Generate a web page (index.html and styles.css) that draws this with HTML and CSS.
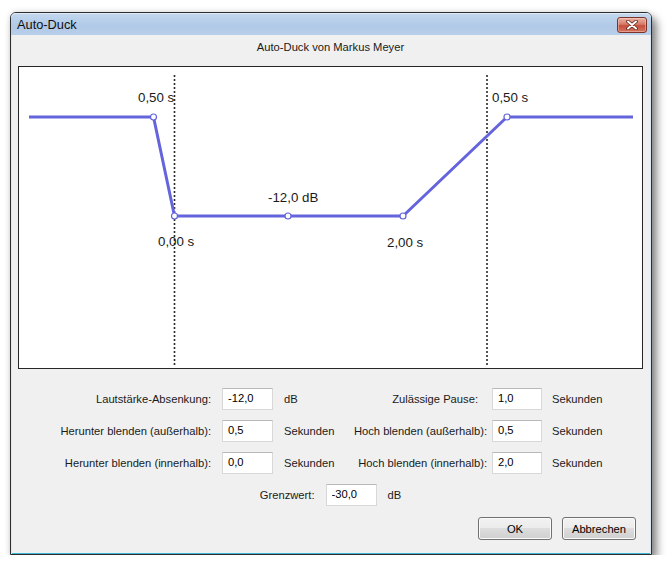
FILE: index.html
```html
<!DOCTYPE html>
<html lang="de">
<head>
<meta charset="utf-8">
<title>Auto-Duck</title>
<link rel="stylesheet" href="styles.css">
</head>
<body>
<div class="window">
  <div class="titlebar">
    <span class="title">Auto-Duck</span>
    <div class="close" aria-label="Schließen">
      <svg width="14" height="10" viewBox="0 0 14 10">
        <path d="M3 1.5 L11 8.5 M11 1.5 L3 8.5" stroke="#5a241b" stroke-width="3.6" stroke-linecap="round" fill="none"/>
        <path d="M3 1.5 L11 8.5 M11 1.5 L3 8.5" stroke="#ffffff" stroke-width="2" stroke-linecap="round" fill="none"/>
      </svg>
    </div>
  </div>
  <div class="client">
    <div class="caption">Auto-Duck von Markus Meyer</div>
    <div class="graph">
      <svg width="623" height="301" viewBox="0 0 623 301">
        <line class="dash" x1="155.5" y1="8" x2="155.5" y2="299"/>
        <line class="dash" x1="468" y1="8" x2="468" y2="299"/>
        <polyline class="curve" points="10,50 134.5,50 155.5,149 384,149 488,50 614,50"/>
        <circle class="pt" cx="134.5" cy="50" r="3"/>
        <circle class="pt" cx="155.5" cy="149" r="3"/>
        <circle class="pt" cx="269" cy="149" r="3"/>
        <circle class="pt" cx="384" cy="149" r="3"/>
        <circle class="pt" cx="488" cy="50" r="3"/>
        <text class="gl" x="119" y="35">0,50 s</text>
        <text class="gl" x="139" y="179">0,00 s</text>
        <text class="gl" x="249" y="135">-12,0 dB</text>
        <text class="gl" x="368" y="180">2,00 s</text>
        <text class="gl" x="473" y="35">0,50 s</text>
      </svg>
    </div>
    <div class="form">
      <span class="lbl">Lautstärke-Absenkung:</span>
      <input class="field f1" type="text" value="-12,0">
      <span class="unit u1">dB</span>
      <span class="lbl r1">Zulässige Pause:</span>
      <input class="field f2" type="text" value="1,0">
      <span class="unit u2">Sekunden</span>

      <span class="lbl">Herunter blenden (außerhalb):</span>
      <input class="field f1" type="text" value="0,5">
      <span class="unit u1">Sekunden</span>
      <span class="lbl r2">Hoch blenden (außerhalb):</span>
      <input class="field f2" type="text" value="0,5">
      <span class="unit u2">Sekunden</span>

      <span class="lbl">Herunter blenden (innerhalb):</span>
      <input class="field f1" type="text" value="0,0">
      <span class="unit u1">Sekunden</span>
      <span class="lbl r2">Hoch blenden (innerhalb):</span>
      <input class="field f2" type="text" value="2,0">
      <span class="unit u2">Sekunden</span>
    </div>
    <div class="thresh">
      <span class="lbl">Grenzwert:</span>
      <input class="field f3" type="text" value="-30,0">
      <span class="unit">dB</span>
    </div>
    <div class="buttons">
      <button class="btn" type="button">OK</button>
      <button class="btn" type="button">Abbrechen</button>
    </div>
  </div>
</div>
</body>
</html>
```

FILE: styles.css
```css
html, body {
  margin: 0;
  padding: 0;
  background: #ffffff;
}

body {
  font-family: "Liberation Sans", Arial, sans-serif;
  font-size: 11.2px;
  color: #1a1a1a;
}

.window {
  margin: 12px 0 0 10px;
  width: 642px;
  box-sizing: border-box;
  border: 1px solid #2e2e2e;
  border-radius: 6px 6px 0 0;
  background: #f0f0f0;
  box-shadow: 5px 6px 9px rgba(0, 0, 0, 0.45), 0 0 6px rgba(0, 0, 0, 0.15);
}

.titlebar {
  height: 22px;
  display: flex;
  justify-content: space-between;
  align-items: flex-start;
  padding: 0 4px 0 6px;
  background: linear-gradient(#c4d8ef, #b0c9e6 60%, #b8cfe9);
  border-radius: 5px 5px 0 0;
  box-shadow: inset 0 1px 0 rgba(255, 255, 255, 0.5);
}

.title {
  font-size: 12.8px;
  line-height: 23px;
  color: #101010;
}

.close {
  width: 30px;
  height: 16px;
  box-sizing: border-box;
  margin-top: 4px;
  border: 1px solid #7c3328;
  border-radius: 3px;
  background: linear-gradient(#eab3a6, #d67b68 45%, #c4503d 55%, #d4745f);
  box-shadow: inset 0 0 0 1px rgba(255, 210, 200, 0.45);
  display: flex;
  align-items: center;
  justify-content: center;
}

.close svg {
  display: block;
}

.client {
  padding: 5px 8px 14px 7px;
  box-shadow: inset 1px 0 0 #dce8f5, inset -1px 0 0 #dce8f5, inset 0 -1px 0 #3db7d8;
}

.caption {
  text-align: center;
  line-height: 14px;
  height: 14px;
}

.graph {
  margin-top: 12px;
  border: 1px solid #262626;
  background: #ffffff;
  height: 301px;
}

.graph svg {
  display: block;
}

.dash {
  stroke: #2a2a2a;
  stroke-width: 1.6;
  stroke-dasharray: 2 2;
}

.curve {
  fill: none;
  stroke: #6464dc;
  stroke-width: 3;
  stroke-linejoin: round;
}

.pt {
  fill: #ffffff;
  stroke: #6464dc;
  stroke-width: 1.2;
}

.gl {
  font-family: "Liberation Sans", Arial, sans-serif;
  font-size: 13.3px;
  fill: #1a1a1a;
}

.form {
  margin-top: 19px;
  display: grid;
  grid-template-columns: 193px 62px 67px 152px 50px 1fr;
  grid-auto-rows: 22px;
  row-gap: 10px;
  align-items: center;
}

.lbl {
  text-align: right;
  white-space: nowrap;
}

.r1 {
  padding-right: 14px;
}

.r2 {
  padding-right: 5px;
}

.unit {
  white-space: nowrap;
}

.u1 {
  padding-left: 11px;
}

.u2 {
  padding-left: 10px;
}

.field {
  height: 22px;
  box-sizing: border-box;
  margin: 0;
  border: 1px solid #d8d8d8;
  border-top-color: #b9b9b9;
  background: #ffffff;
  font-family: "Liberation Sans", Arial, sans-serif;
  font-size: 11.2px;
  color: #000000;
  padding: 0 0 2px 5px;
  outline: none;
}

.f1 {
  width: 51px;
  margin-left: 11px;
}

.f2 {
  width: 50px;
}

.f3 {
  width: 51px;
  margin: 0 11px;
}

.thresh {
  margin-top: 10px;
  height: 22px;
  display: flex;
  justify-content: center;
  align-items: center;
}

.buttons {
  margin-top: 11px;
  margin-right: 7px;
  display: flex;
  justify-content: flex-end;
  gap: 10px;
}

.btn {
  width: 74px;
  height: 23px;
  box-sizing: border-box;
  margin: 0;
  padding: 0;
  border: 1px solid #707070;
  border-radius: 3px;
  background: linear-gradient(#f2f2f2 0%, #ebebeb 50%, #dddddd 50%, #cfcfcf 100%);
  box-shadow: inset 0 0 0 1px #fbfbfb;
  font-family: "Liberation Sans", Arial, sans-serif;
  font-size: 11.2px;
  color: #000000;
}
```
